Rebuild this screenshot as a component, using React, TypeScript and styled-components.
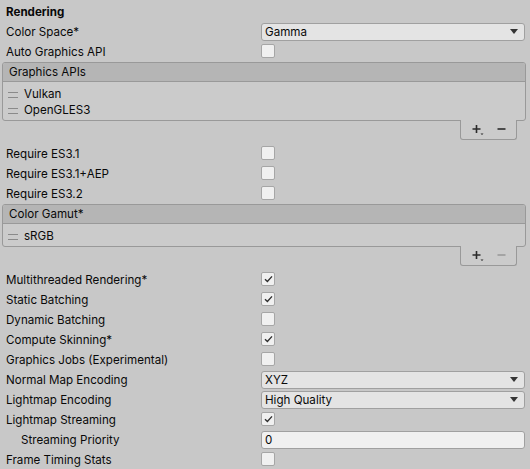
import React from "react";
import styled, { createGlobalStyle } from "styled-components";

const GlobalStyle = createGlobalStyle`
  html, body {
    margin: 0;
    padding: 0;
    background: #c8c8c8;
  }
  body {
    font-family: Inter, "Noto Sans", "Liberation Sans", sans-serif;
    font-size: 11.6px;
    color: #090909;
  }
`;

const Panel = styled.div`
  width: 530px;
  height: 469px;
  box-sizing: border-box;
  padding: 2px 4px 0 2px;
  overflow: hidden;
`;

const SectionTitle = styled.div`
  height: 19px;
  line-height: 20px;
  padding-left: 4px;
  font-weight: 700;
`;

const Row = styled.div<{ $indent?: boolean }>`
  display: grid;
  grid-template-columns: ${(p) => (p.$indent ? "240px" : "255px")} 1fr;
  align-items: center;
  height: 20px;
  padding: 0 1px 0 ${(p) => (p.$indent ? "19px" : "4px")};
`;

const Label = styled.div`
  white-space: nowrap;
  line-height: 20px;
  padding-top: 1px;
`;

const Box = styled.div`
  width: 14px;
  height: 14px;
  box-sizing: border-box;
  border: 1px solid #a6a6a6;
  border-radius: 2px;
  background: #f0f0f0;
  display: flex;
  align-items: center;
  justify-content: center;
  margin-top: -2px;
`;

const Select = styled.div`
  height: 18px;
  box-sizing: border-box;
  border: 1px solid #a0a0a0;
  border-radius: 3px;
  background: #e4e4e4;
  display: flex;
  align-items: center;
  justify-content: space-between;
  padding: 0 6px 0 3px;
  line-height: 16px;
`;

const Arrow = styled.span`
  width: 0;
  height: 0;
  border-left: 4px solid transparent;
  border-right: 4px solid transparent;
  border-top: 5px solid #353535;
`;

const Field = styled.div`
  height: 18px;
  box-sizing: border-box;
  border: 1px solid #a0a0a0;
  border-radius: 3px;
  background: #f0f0f0;
  padding: 0 3px;
  line-height: 17px;
`;

const List = styled.div`
  margin-top: 1px;
  border: 1px solid #999999;
  border-radius: 3px;
  background: #cbcbcb;
`;

const ListHeader = styled.div`
  height: 18px;
  line-height: 19px;
  padding-left: 6px;
  background: #b5b5b5;
  border-bottom: 1px solid #999999;
  border-radius: 2px 2px 0 0;
`;

const ListBody = styled.div`
  padding: 4px 0 2px;
`;

const ListItem = styled.div`
  display: flex;
  align-items: center;
  height: 16px;
  padding-left: 5px;
  gap: 6px;
`;

const Handle = styled.span`
  width: 10px;
  height: 4px;
  border-top: 1px solid #8a8a8a;
  border-bottom: 1px solid #8a8a8a;
  margin-top: 2px;
`;

const Footer = styled.div`
  display: flex;
  justify-content: flex-end;
  padding-right: 9px;
  margin-top: -1px;
  margin-bottom: 3px;
`;

const FooterTab = styled.div`
  width: 57px;
  height: 20px;
  box-sizing: border-box;
  border: 1px solid #999999;
  border-top: none;
  border-radius: 0 0 3px 3px;
  background: #cbcbcb;
  display: flex;
  align-items: center;
  justify-content: center;
  gap: 13px;
  padding-top: 1px;
`;

const Check = () => (
  <svg width="9" height="8" viewBox="0 0 9 8">
    <path d="M1 4.2 L3.4 6.4 L8 1.4" fill="none" stroke="#2e2e2e" strokeWidth="1.4" />
  </svg>
);

const PlusIcon = () => (
  <svg width="12" height="12" viewBox="0 0 12 12">
    <path d="M4.5 1v8 M0.5 5h8" stroke="#2b2b2b" strokeWidth="1.6" />
    <path d="M8.5 9.5h3l-1.5 1.5z" fill="#2b2b2b" />
  </svg>
);

const MinusIcon = ({ disabled }: { disabled?: boolean }) => (
  <svg width="9" height="12" viewBox="0 0 9 12">
    <path d="M0.5 5h8" stroke={disabled ? "#9a9a9a" : "#2b2b2b"} strokeWidth="1.6" />
  </svg>
);

function CheckRow({ label, checked }: { label: string; checked?: boolean }) {
  return (
    <Row>
      <Label>{label}</Label>
      <Box>{checked && <Check />}</Box>
    </Row>
  );
}

function SelectRow({ label, value }: { label: string; value: string }) {
  return (
    <Row>
      <Label>{label}</Label>
      <Select>
        <span>{value}</span>
        <Arrow />
      </Select>
    </Row>
  );
}

function ReorderList({ title, items, canRemove }: { title: string; items: string[]; canRemove?: boolean }) {
  return (
    <>
      <List>
        <ListHeader>{title}</ListHeader>
        <ListBody>
          {items.map((item) => (
            <ListItem key={item}>
              <Handle />
              <span>{item}</span>
            </ListItem>
          ))}
        </ListBody>
      </List>
      <Footer>
        <FooterTab>
          <PlusIcon />
          <MinusIcon disabled={!canRemove} />
        </FooterTab>
      </Footer>
    </>
  );
}

export default function App() {
  return (
    <>
      <GlobalStyle />
      <Panel>
        <SectionTitle>Rendering</SectionTitle>
        <SelectRow label="Color Space*" value="Gamma" />
        <CheckRow label="Auto Graphics API" />
        <ReorderList title="Graphics APIs" items={["Vulkan", "OpenGLES3"]} canRemove />
        <CheckRow label="Require ES3.1" />
        <CheckRow label="Require ES3.1+AEP" />
        <CheckRow label="Require ES3.2" />
        <ReorderList title="Color Gamut*" items={["sRGB"]} />
        <CheckRow label="Multithreaded Rendering*" checked />
        <CheckRow label="Static Batching" checked />
        <CheckRow label="Dynamic Batching" />
        <CheckRow label="Compute Skinning*" checked />
        <CheckRow label="Graphics Jobs (Experimental)" />
        <SelectRow label="Normal Map Encoding" value="XYZ" />
        <SelectRow label="Lightmap Encoding" value="High Quality" />
        <CheckRow label="Lightmap Streaming" checked />
        <Row $indent>
          <Label>Streaming Priority</Label>
          <Field>0</Field>
        </Row>
        <CheckRow label="Frame Timing Stats" />
      </Panel>
    </>
  );
}
